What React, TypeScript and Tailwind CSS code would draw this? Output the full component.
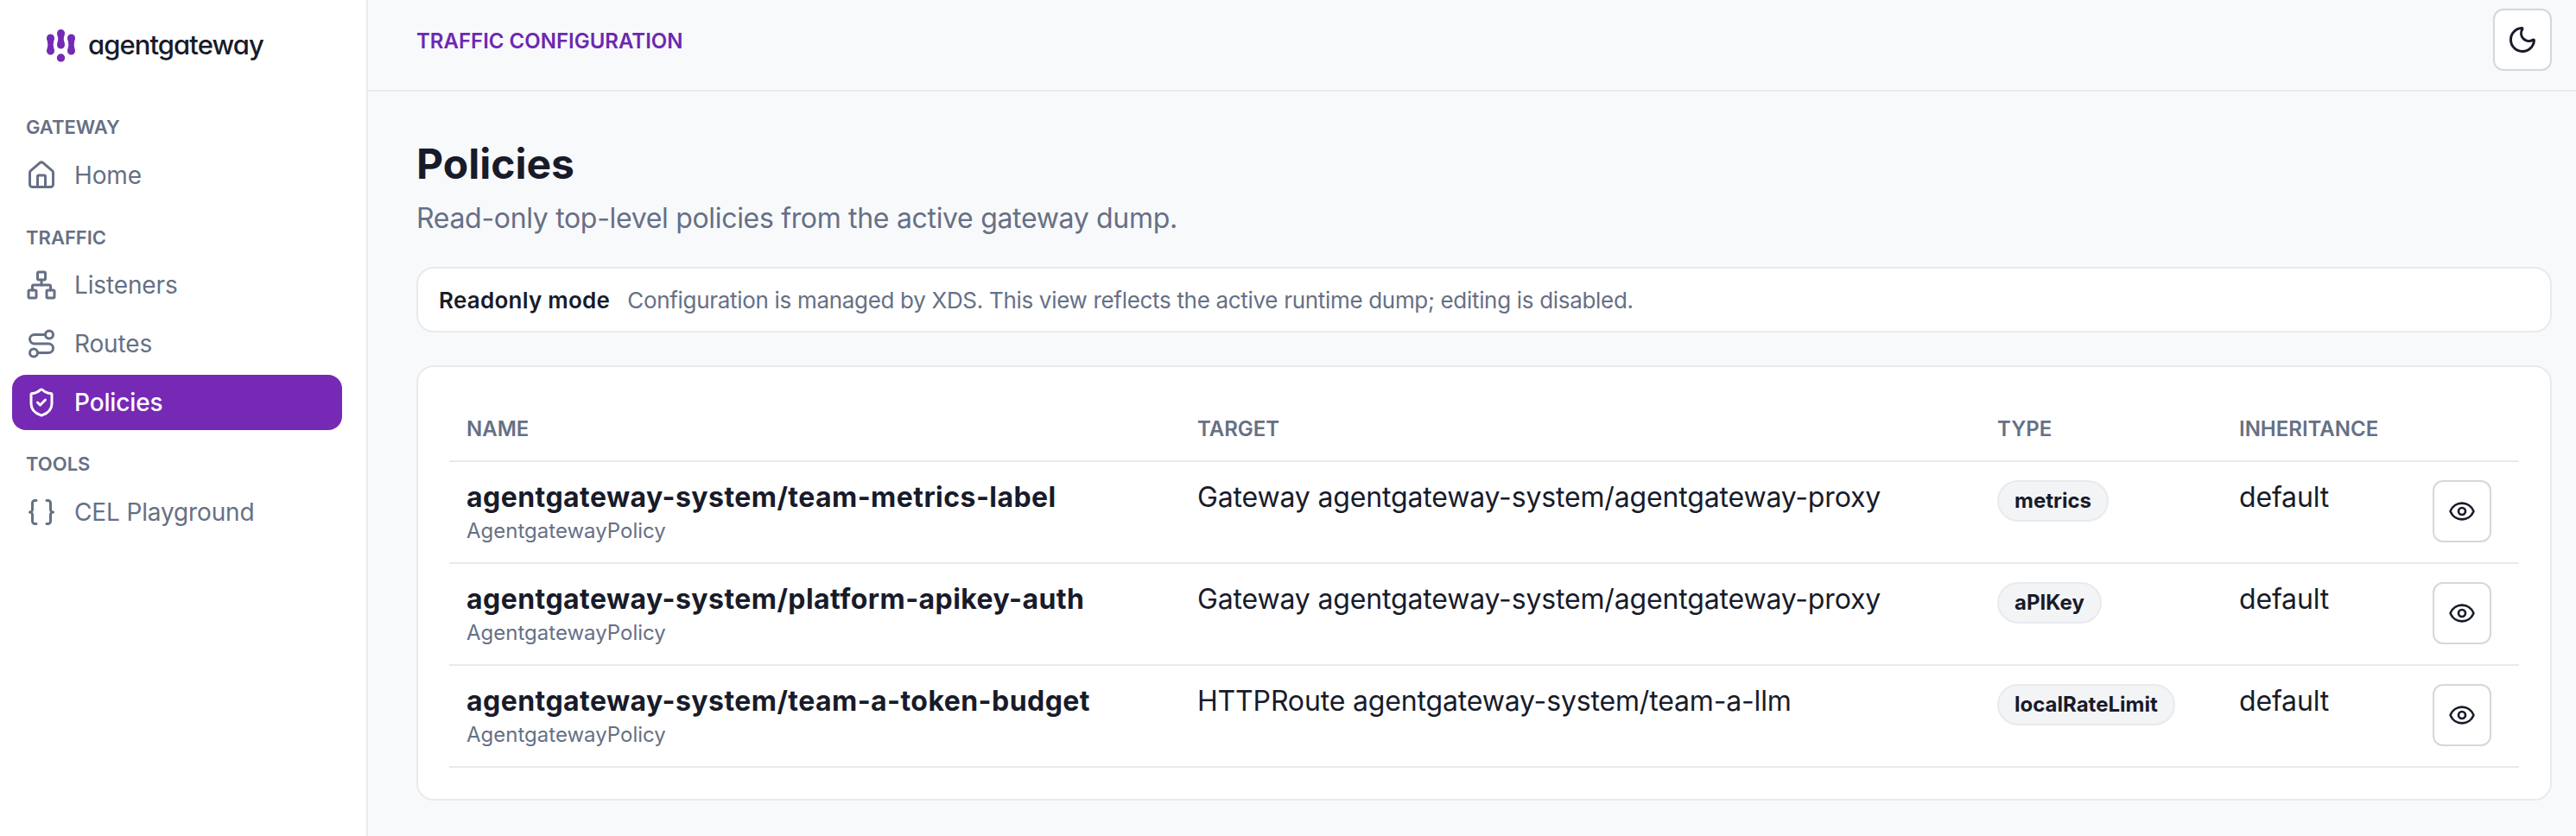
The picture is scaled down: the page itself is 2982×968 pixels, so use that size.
import { Braces, Eye, House, Moon, Network, Route, ShieldCheck } from "lucide-react";
import type { ReactNode } from "react";

type Policy = {
  name: string;
  target: string;
  type: string;
};

const policies: Policy[] = [
  {
    name: "agentgateway-system/team-metrics-label",
    target: "Gateway agentgateway-system/agentgateway-proxy",
    type: "metrics",
  },
  {
    name: "agentgateway-system/platform-apikey-auth",
    target: "Gateway agentgateway-system/agentgateway-proxy",
    type: "aPIKey",
  },
  {
    name: "agentgateway-system/team-a-token-budget",
    target: "HTTPRoute agentgateway-system/team-a-llm",
    type: "localRateLimit",
  },
];

function Logo() {
  return (
    <svg width="33" height="38" viewBox="0 0 33 38" fill="#7629b5">
      <path d="M0 10 a4.500 4.500 0 0 1 9 0 q0 2 -.8 3.500 q-1 4 0 8 q.8 1.500 .8 3.500 a4.500 4.500 0 0 1 -9 0 q0 -2 .8 -3.500 q1 -4 0 -8 q-.8 -1.500 -.8 -3.500 z" />
      <path d="M12 4.500 a4.500 4.500 0 0 1 9 0 q0 2 -.8 3.500 q-1 3 0 6 q.8 2 .8 4 a4.500 4.500 0 0 1 -9 0 q0 -2 .8 -4 q1 -3 0 -6 q-.8 -1.500 -.8 -3.500 z" />
      <circle cx="16.500" cy="33" r="4.700" />
      <path d="M24 10 a4.500 4.500 0 0 1 9 0 q0 2 -.8 3.500 q-1 4 0 8 q.8 1.500 .8 3.500 a4.500 4.500 0 0 1 -9 0 q0 -2 .8 -3.500 q1 -4 0 -8 q-.8 -1.500 -.8 -3.500 z" />
    </svg>
  );
}

function NavLabel({ children }: { children: ReactNode }) {
  return (
    <div className="flex h-[40px] items-center px-[16px] text-[22px] font-semibold uppercase text-[#667085]">
      {children}
    </div>
  );
}

function NavItem({
  icon,
  label,
  active,
}: {
  icon: ReactNode;
  label: string;
  active?: boolean;
}) {
  return (
    <div
      className={
        active
          ? "flex h-[64px] items-center gap-[20px] rounded-[16px] bg-[#7629b5] px-[16px] text-[28px] font-medium tracking-[-0.005em] text-white"
          : "flex h-[64px] items-center gap-[20px] rounded-[16px] px-[16px] text-[28px] tracking-[-0.005em] text-[#667085]"
      }
    >
      {icon}
      <span>{label}</span>
    </div>
  );
}

function Sidebar() {
  return (
    <aside className="flex w-[426px] shrink-0 flex-col border-r-2 border-[#e8eaee] bg-white pl-[14px] pr-[28px]">
      <div className="flex h-[106px] items-center gap-[15px] pl-[40px]">
        <Logo />
        <span className="pb-[2px] text-[31px] font-medium tracking-[-0.03em] text-[#181b2a] [font-feature-settings:'cv11']">
          agentgateway
        </span>
      </div>
      <div className="mt-[21px]">
        <NavLabel>Gateway</NavLabel>
        <div className="mt-[4px]">
          <NavItem icon={<House size={36} />} label="Home" />
        </div>
      </div>
      <div className="mt-[20px]">
        <NavLabel>Traffic</NavLabel>
        <div className="mt-[3px] flex flex-col gap-[4px]">
          <NavItem icon={<Network size={36} />} label="Listeners" />
          <NavItem icon={<Route size={36} />} label="Routes" />
          <NavItem active icon={<ShieldCheck size={36} />} label="Policies" />
        </div>
      </div>
      <div className="mt-[19px]">
        <NavLabel>Tools</NavLabel>
        <div className="mt-[4px]">
          <NavItem icon={<Braces size={36} />} label="CEL Playground" />
        </div>
      </div>
    </aside>
  );
}

function PolicyRow({ policy }: { policy: Policy }) {
  return (
    <tr className="border-b-2 border-[#e8eaee]">
      <td className="h-[118px] px-[20px] pt-[21px] align-top">
        <div className="text-[32px] font-bold leading-[40px] tracking-[0.014em] text-[#181b2a]">
          {policy.name}
        </div>
        <div className="mt-[3px] text-[24px] leading-[32px] text-[#667085]">AgentgatewayPolicy</div>
      </td>
      <td className="px-[20px] pt-[21px] align-top text-[32px] leading-[40px] tracking-[-0.005em] text-[#181b2a]">
        {policy.target}
      </td>
      <td className="px-[20px] pt-[21px] align-top">
        <span className="inline-flex h-[48px] items-center rounded-full border-2 border-[#e8eaee] bg-[#f3f4f6] px-[18px] text-[24px] font-bold text-[#181b2a]">
          {policy.type}
        </span>
      </td>
      <td className="px-[20px] pt-[21px] align-top text-[32px] leading-[40px] tracking-[-0.005em] text-[#181b2a]">
        default
      </td>
      <td className="px-[20px] pt-[21px] align-top">
        <button className="flex h-[72px] w-[68px] items-center justify-center rounded-[12px] border-2 border-[#d5d7dd] bg-white text-[#181b2a]">
          <Eye size={32} />
        </button>
      </td>
    </tr>
  );
}

export default function App() {
  return (
    <div className="flex h-[968px] w-[2982px] overflow-hidden bg-[#f8f9fb] font-['Inter',sans-serif]">
      <Sidebar />
      <main className="flex min-w-0 flex-1 flex-col">
        <header className="flex h-[106px] items-center justify-between border-b-2 border-[#e8eaee] pb-[12px] pl-[56px] pr-[28px]">
          <span className="pt-[3px] text-[24px] font-semibold uppercase text-[#6d28b0]">
            Traffic Configuration
          </span>
          <button className="flex h-[72px] w-[68px] items-center justify-center rounded-[12px] border-2 border-[#d5d7dd] bg-white text-[#181b2a]">
            <Moon size={36} />
          </button>
        </header>
        <div className="flex flex-col pl-[56px] pr-[28px] pt-[52px]">
          <h1 className="text-[48px] font-bold leading-[64px] text-[#181b2a]">Policies</h1>
          <p className="mt-[11px] text-[32px] leading-[40px] tracking-[-0.01em] text-[#667085]">
            Read-only top-level policies from the active gateway dump.
          </p>
          <div className="mt-[36px] flex h-[76px] items-center gap-[20px] rounded-[20px] border-2 border-[#e8eaee] bg-white px-[24px] text-[26px]">
            <span className="font-semibold tracking-[0.01em] text-[#181b2a]">Readonly mode</span>
            <span className="tracking-[-0.012em] text-[#667085]">
              Configuration is managed by XDS. This view reflects the active runtime dump; editing is disabled.
            </span>
          </div>
          <div className="mt-[38px] rounded-[20px] border-2 border-[#e8eaee] bg-white p-[36px]">
            <table className="w-full table-fixed border-collapse">
              <thead>
                <tr className="border-b-2 border-[#e8eaee] text-left text-[24px] font-semibold uppercase text-[#667085]">
                  <th className="h-[73px] w-[846px] px-[20px] font-semibold">Name</th>
                  <th className="w-[926px] px-[20px] font-semibold">Target</th>
                  <th className="w-[280px] px-[20px] font-semibold">Type</th>
                  <th className="w-[224px] px-[20px] font-semibold">Inheritance</th>
                  <th className="px-[20px]"></th>
                </tr>
              </thead>
              <tbody>
                {policies.map((policy) => (
                  <PolicyRow key={policy.name} policy={policy} />
                ))}
              </tbody>
            </table>
          </div>
        </div>
      </main>
    </div>
  );
}
